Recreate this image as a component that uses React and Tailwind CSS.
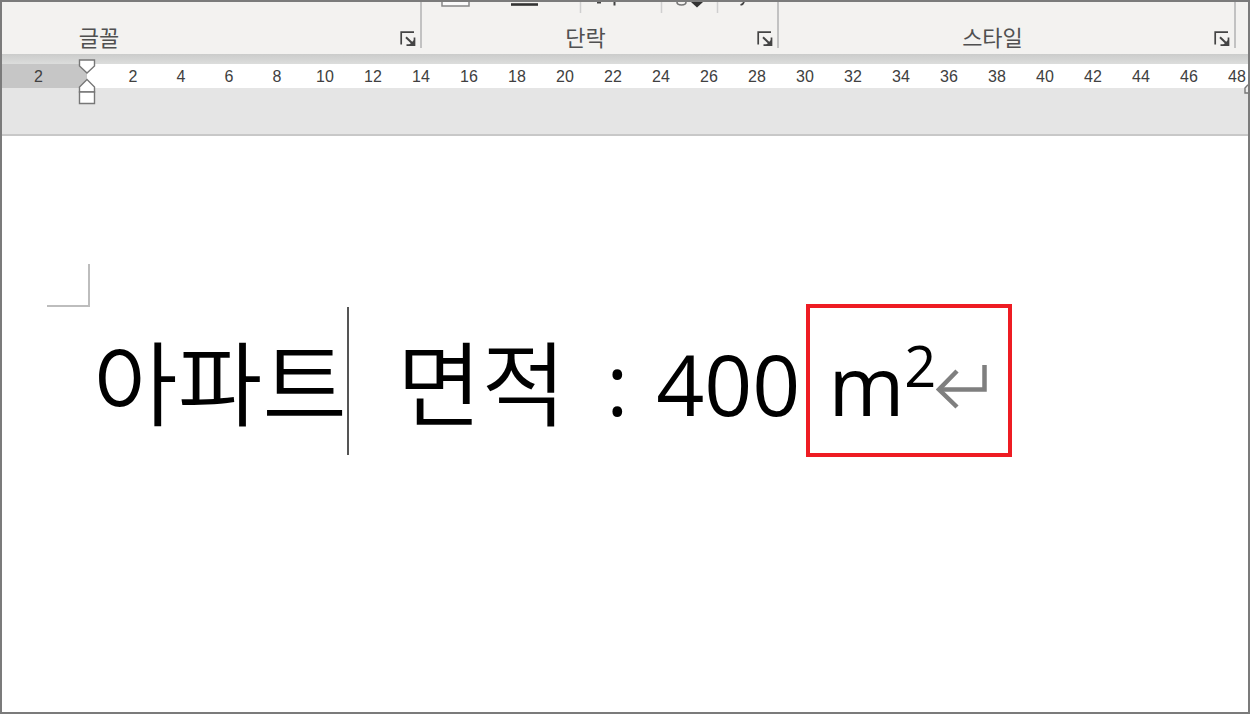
const MARKS = Array.from({ length: 24 }, (_, i) => (i + 1) * 2);

function LauncherButton({ label }) {
  return (
    <button type="button" aria-label={label} className="flex h-[18px] w-6 shrink-0 items-center justify-center">
      <svg width="16" height="16" viewBox="0 0 16 16" fill="none" stroke="#444" strokeWidth="1.7" aria-hidden="true">
        <path d="M1.2 13.5V1.2H14" />
        <path d="M6 6.2L13 13" strokeWidth="2" />
        <path d="M14.500 6.5V14.200H6.5" />
        <path d="M14 9v5H9z" fill="#444" stroke="none" />
      </svg>
    </button>
  );
}

function ParagraphTools() {
  return (
    <svg width="340" height="12" viewBox="0 0 340 12" fill="none" className="absolute left-0 top-0" aria-hidden="true">
      <path d="M20 0V4H47V0" stroke="#888" strokeWidth="1.5" fill="#fbfbfb" />
      <path d="M89 2.5H116" stroke="#333" strokeWidth="2.6" />
      <path d="M158.500 0V11M239.500 0V11M295.500 0V11" stroke="#cfcfcf" strokeWidth="1.5" />
      <path d="M175 0.500H179M192.500 0V3.500" stroke="#444" strokeWidth="2" />
      <path d="M255 0C255 4 264 4 264 0" stroke="#777" strokeWidth="1.600" />
      <path d="M269 0H281L275 5.500Z" fill="#333" />
      <path d="M322 0C321.500 1.500 320.500 2.500 318.500 3" stroke="#444" strokeWidth="1.800" />
    </svg>
  );
}

function RibbonGroup({ name, clipped, children }) {
  return (
    <section className="relative flex items-end border-r-2 border-[#c2c2c2]">
      {children}
      <h2
        className={
          "flex-1 text-center text-[22px] leading-[22px] text-[#505050] " + (clipped ? "pr-[200px]" : "pr-1")
        }
      >
        {name}
      </h2>
      <LauncherButton label={name + " 설정"} />
    </section>
  );
}

function Ruler() {
  return (
    <div className="relative flex h-6 bg-white font-['Liberation_Sans',sans-serif] text-base leading-[26px] text-[#404040]">
      <div className="w-[85px] shrink-0 bg-[#c6c6c6] pr-3 text-center">2</div>
      <div className="flex min-w-0 flex-1 overflow-hidden pl-[22px]">
        {MARKS.map((n) => (
          <span key={n} className="w-12 shrink-0 text-center">
            {n}
          </span>
        ))}
      </div>
      <svg
        width="18"
        height="46"
        viewBox="0 0 18 46"
        className="absolute -top-[5px] left-[76px]"
        fill="#fff"
        stroke="#777"
        strokeWidth="1.4"
        aria-hidden="true"
      >
        <path d="M1.500 1H16.500V7L9 14L1.500 7Z" />
        <path d="M1.500 33V28L9 20.500L16.500 28V33Z" />
        <path d="M1.500 33H16.500V44.500H1.500Z" />
      </svg>
      <svg width="4" height="10" viewBox="0 0 4 10" className="absolute right-0 top-5" fill="#eee" stroke="#777" strokeWidth="1.4" aria-hidden="true">
        <path d="M4 0.800L1 4V9H4" />
      </svg>
    </div>
  );
}

export default function App() {
  return (
    <div className="flex min-h-screen flex-col overflow-hidden border-2 border-[#7b7b7b] bg-white font-['Noto_Sans','Noto_Sans_CJK_KR',sans-serif]">
      <header>
        <div className="grid h-[52px] grid-cols-[420fr_357fr_457fr_12fr] bg-[#f3f2f0] pb-1.5">
          <RibbonGroup name="글꼴" clipped />
          <RibbonGroup name="단락">
            <ParagraphTools />
          </RibbonGroup>
          <RibbonGroup name="스타일" />
        </div>
        <div className="h-2.5 bg-linear-to-b from-[#cbcccb] to-[#dcdddc]" />
        <Ruler />
        <div className="h-12 border-b-2 border-[#c8c8c8] bg-[#e5e5e5]" />
      </header>

      <main className="flex-1 pl-[45px] pt-32 text-black">
        <div className="size-[43px] border-b-2 border-r-2 border-[#bdbdbd]" />
        <p className="-mt-[3px] flex h-[153px] items-center whitespace-nowrap pl-[46px] font-['Open_Sans','Noto_Sans',sans-serif] text-[84px] leading-[90px]">
          <span className="pb-1 font-['Noto_Sans_CJK_KR',sans-serif] text-[92px] font-[350]">아파트</span>
          <span className="h-[148px] w-0.5 bg-[#555]" />
          <span className="ml-12 pb-1 font-['Noto_Sans_CJK_KR',sans-serif] text-[92px] font-[350]">면적</span>
          <span className="ml-10 pt-1.5">:</span>
          <span className="ml-7 pt-1.5">400</span>
          <span className="ml-1.5 flex h-full w-[206px] items-center border-4 border-[#ee1c23] pl-[18px]">
            <span className="pt-1.5 text-[82px]">m</span>
            <sup className="top-0 mb-8 text-[56px] leading-none">2</sup>
            <svg width="52" height="44" viewBox="0 0 52 44" fill="none" stroke="#7f7f7f" strokeWidth="4.500" className="mt-3" aria-hidden="true">
              <path d="M48.500 0V24.500H3" />
              <path d="M21 6L3 24.500L21 42" />
            </svg>
          </span>
        </p>
      </main>
    </div>
  );
}
